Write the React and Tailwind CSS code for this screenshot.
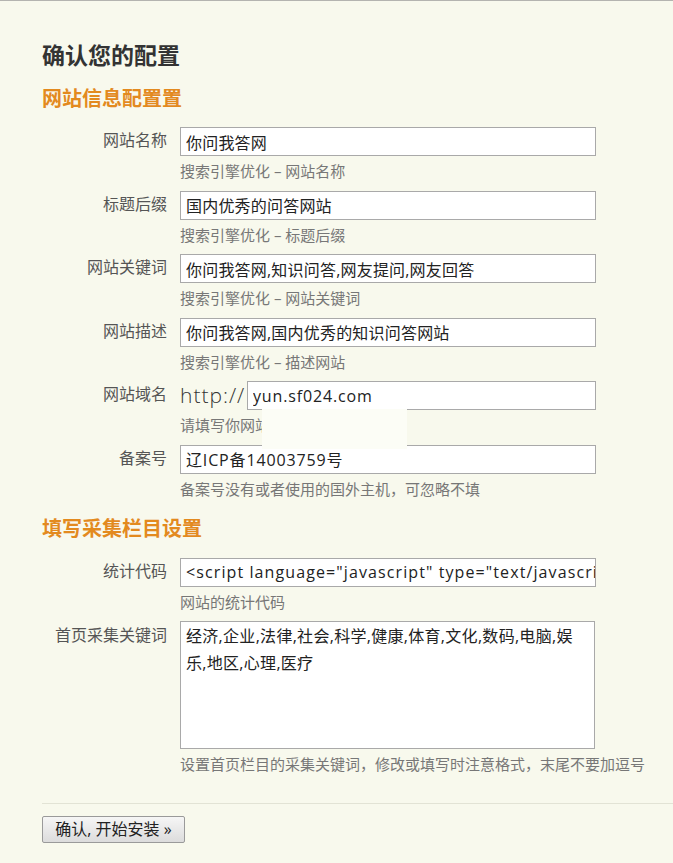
import React from "react";

const FONT = { fontFamily: '"Open Sans", "Noto Sans CJK SC", sans-serif' };

function Row({ label, value, hint, prefix, track = "tracking-[0.2px]" }) {
  return (
    <div className="flex">
      <div className="w-[125px] shrink-0 text-right text-[16px] leading-[27px] text-[#555]">{label}</div>
      <div className="ml-[13px] flex flex-col">
        {prefix ? (
          <div className="flex items-center">
            <span className="w-[67px] text-[21px] leading-[29px] font-light tracking-[1px] text-[#333]">http://</span>
            <input
              readOnly
              value={value}
              className={`h-[29px] w-[349px] border border-[#a9a9a9] bg-white pl-[5px] text-[16px] text-[#222] outline-none ${track}`}
              style={FONT}
            />
          </div>
        ) : (
          <input
            readOnly
            value={value}
            className={`h-[29px] w-[416px] border border-[#a9a9a9] bg-white pl-[5px] text-[16px] text-[#222] outline-none ${track}`}
            style={FONT}
          />
        )}
        <div className="h-[34.6px] text-[15px] leading-[30px] text-[#777]">{hint}</div>
      </div>
    </div>
  );
}

export default function App() {
  return (
    <div className="relative min-h-[863px] w-full border-t border-[#b4b4b0] bg-[#f8f9ed]" style={FONT}>
      <div className="pl-[42px] pt-[38px]">
        <h1 className="h-[32px] text-[23px] font-bold leading-[32px] text-[#333]">确认您的配置</h1>
        <h2 className="mt-[14px] h-[28px] text-[20px] font-bold leading-[28px] text-[#e38a1f]">网站信息配置置</h2>
      </div>
      <div className="mt-[14px] pl-[42px]">
        <Row label="网站名称" value="你问我答网" hint="搜索引擎优化 – 网站名称" />
        <Row label="标题后缀" value="国内优秀的问答网站" hint="搜索引擎优化 – 标题后缀" />
        <Row label="网站关键词" value="你问我答网,知识问答,网友提问,网友回答" hint="搜索引擎优化 – 网站关键词" />
        <Row label="网站描述" value="你问我答网,国内优秀的知识问答网站" hint="搜索引擎优化 – 描述网站" />
        <Row label="网站域名" value="yun.sf024.com" hint="请填写你网站的域名，安装后使用" prefix track="tracking-[0.85px]" />
        <Row label="备案号" value="辽ICP备14003759号" hint="备案号没有或者使用的国外主机，可忽略不填" track="tracking-[0.85px]" />
      </div>
      <div className="pl-[42px]">
        <h2 className="mt-[6px] h-[28px] text-[20px] font-bold leading-[28px] text-[#e38a1f]">填写采集栏目设置</h2>
      </div>
      <div className="mt-[15px] pl-[42px]">
        <Row
          label="统计代码"
          value={'<script language="javascript" type="text/javascript" src="http://js.users.51.la/"></script>'}
          hint="网站的统计代码"
          track="tracking-[1.1px]"
        />
        <div className="flex">
          <div className="w-[125px] shrink-0 text-right text-[16px] leading-[29px] text-[#555]">首页采集关键词</div>
          <div className="ml-[13px] flex flex-col">
            <div className="h-[128px] w-[415px] border border-[#a9a9a9] bg-white px-[5px] pt-[1px] text-[16px] leading-[27px] tracking-[0.3px] text-[#222]">
              经济,企业,法律,社会,科学,健康,体育,文化,数码,电脑,娱
              <br />
              乐,地区,心理,医疗
            </div>
            <div className="h-[34px] text-[15px] leading-[30px] text-[#777]">
              设置首页栏目的采集关键词，修改或填写时注意格式，末尾不要加逗号
            </div>
          </div>
        </div>
      </div>
      <div className="ml-[42px] mt-[20px] border-t border-[#e2e3d5]" />
      <div className="pl-[42px] pt-[12px]">
        <button className="h-[27px] w-[143px] rounded-[2px] border border-[#9a9a9a] bg-gradient-to-b from-[#f6f6f6] to-[#dcdcdc] text-[16px] leading-[25px] text-[#222]">
          确认, 开始安装 »
        </button>
      </div>
      <div className="absolute left-[262px] top-[408px] h-[40px] w-[145px] bg-[#fcfdf6]" />
    </div>
  );
}
